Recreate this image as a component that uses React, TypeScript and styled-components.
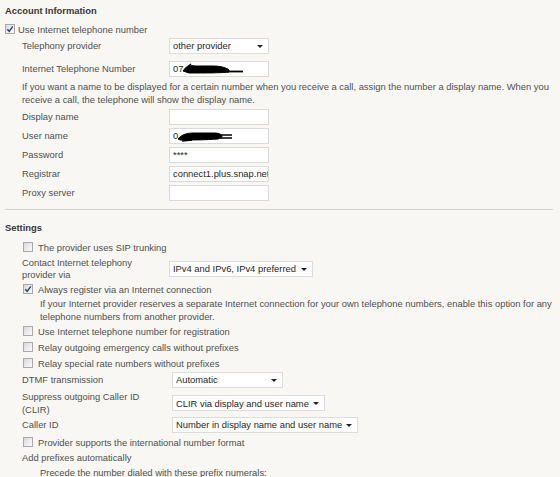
import React from "react";
import styled, { createGlobalStyle } from "styled-components";

const Global = createGlobalStyle`
  html, body { margin: 0; padding: 0; background: #f8f7f3; }
  * { box-sizing: border-box; }
`;

const Page = styled.div`
  width: 560px;
  height: 477px;
  overflow: hidden;
  background: #f8f7f3;
  font-family: "Liberation Sans", Arial, sans-serif;
  font-size: 9.4px;
  color: #505050;
  padding: 4px 2px 0 5px;
`;

const SectionTitle = styled.div<{ $mt?: number }>`
  font-weight: bold;
  color: #363636;
  line-height: 13px;
  margin-top: ${(p) => p.$mt ?? 0}px;
`;

const CheckRow = styled.div<{ $indent: number; $gap: number; $mt?: number }>`
  display: flex;
  align-items: center;
  height: 16px;
  gap: ${(p) => p.$gap}px;
  padding-left: ${(p) => p.$indent}px;
  margin-top: ${(p) => p.$mt ?? 0}px;
  white-space: nowrap;
`;

const Box = styled.span`
  width: 10px;
  height: 10px;
  flex: none;
  border: 1px solid #a9a9a9;
  background: linear-gradient(135deg, #d9d9d9 0%, #eeeeee 60%, #fafafa 100%);
  display: flex;
  align-items: center;
  justify-content: center;
`;

const FormRow = styled.div<{ $labelW: number; $mt?: number; $lh?: number }>`
  display: grid;
  grid-template-columns: ${(p) => p.$labelW}px auto;
  align-items: center;
  padding-left: 17px;
  margin-top: ${(p) => p.$mt ?? 0}px;
  line-height: ${(p) => p.$lh ?? 16}px;
`;

const Label = styled.div``;

const Field = styled.div`
  width: 100px;
  height: 16px;
  background: #fff;
  border: 1px solid #dadada;
  color: #262626;
  padding: 0 2px 0 3px;
  line-height: 14px;
  white-space: nowrap;
  overflow: hidden;
  display: flex;
  align-items: center;
`;

const Select = styled.div<{ $w: number }>`
  width: ${(p) => p.$w}px;
  height: 16px;
  background: #fff;
  border: 1px solid #dcdcdc;
  color: #262626;
  padding: 0 5px 0 3px;
  display: flex;
  align-items: center;
  justify-content: space-between;
  white-space: nowrap;
`;

const Arrow = styled.span`
  width: 0;
  height: 0;
  border-left: 3px solid transparent;
  border-right: 3px solid transparent;
  border-top: 3px solid #222;
  flex: none;
`;

const Para = styled.div<{ $indent: number; $mt?: number }>`
  padding-left: ${(p) => p.$indent}px;
  line-height: 13px;
  margin-top: ${(p) => p.$mt ?? 0}px;
`;

const PlainLine = styled.div<{ $indent: number; $lh: number; $mt?: number }>`
  padding-left: ${(p) => p.$indent}px;
  line-height: ${(p) => p.$lh}px;
  margin-top: ${(p) => p.$mt ?? 0}px;
  white-space: nowrap;
`;

const Divider = styled.div`
  margin: 8px 5px 0 0;
  border-top: 1px solid #d4d4cd;
  border-bottom: 1px solid #fcfcfa;
`;

const Check = ({ checked }: { checked?: boolean }) => (
  <Box>
    {checked && (
      <svg width="8" height="8" viewBox="0 0 8 8">
        <path d="M1.3 4.2 L3.2 6.3 L6.8 1.4" fill="none" stroke="#23407a" strokeWidth="1.4" />
      </svg>
    )}
  </Box>
);

const Scribble = ({ w, variant }: { w: number; variant: number }) => (
  <svg width={w} height="12" viewBox={`0 0 ${w} 12`} style={{ flex: "none" }}>
    {variant === 1 ? (
      <g fill="#000" stroke="#000">
        <path d="M0 8 C3 3, 8 2, 12 3 L30 3 C38 3, 44 5, 46 7 L46 9 C40 10, 20 10, 6 10 Z" />
        <path d="M2 6 L8 1" strokeWidth="1.5" />
        <path d="M44 8.5 L60 8.5" strokeWidth="1.8" />
      </g>
    ) : (
      <g fill="#000" stroke="#000">
        <path d="M0 9 C4 4, 10 3, 16 3 L36 3 C42 3, 44 5, 44 7 L40 9 C28 10, 12 10, 2 10 Z" />
        <path d="M4 11 L14 10" strokeWidth="1.4" />
        <path d="M42 5 L54 5 M42 8 L54 8" strokeWidth="1.3" />
      </g>
    )}
  </svg>
);

export default function App() {
  return (
    <Page>
      <Global />
      <SectionTitle>Account Information</SectionTitle>
      <CheckRow $indent={0} $gap={3} $mt={4}>
        <Check checked />
        <span>Use Internet telephone number</span>
      </CheckRow>
      <FormRow $labelW={147} $mt={1}>
        <Label>Telephony provider</Label>
        <Select $w={100}>
          <span>other provider</span>
          <Arrow />
        </Select>
      </FormRow>
      <FormRow $labelW={147} $mt={7}>
        <Label>Internet Telephone Number</Label>
        <Field>
          <span>07</span>
          <Scribble w={62} variant={1} />
        </Field>
      </FormRow>
      <Para $indent={17} $mt={3}>
        If you want a name to be displayed for a certain number when you receive a call, assign the number a display name. When you receive a call, the telephone will show the display name.
      </Para>
      <FormRow $labelW={147} $mt={3}>
        <Label>Display name</Label>
        <Field />
      </FormRow>
      <FormRow $labelW={147} $mt={3}>
        <Label>User name</Label>
        <Field>
          <span>0</span>
          <Scribble w={56} variant={2} />
        </Field>
      </FormRow>
      <FormRow $labelW={147} $mt={3}>
        <Label>Password</Label>
        <Field>****</Field>
      </FormRow>
      <FormRow $labelW={147} $mt={3}>
        <Label>Registrar</Label>
        <Field>connect1.plus.snap.net</Field>
      </FormRow>
      <FormRow $labelW={147} $mt={3}>
        <Label>Proxy server</Label>
        <Field />
      </FormRow>
      <Divider />
      <SectionTitle $mt={10}>Settings</SectionTitle>
      <CheckRow $indent={18} $gap={5} $mt={5}>
        <Check />
        <span>The provider uses SIP trunking</span>
      </CheckRow>
      <FormRow $labelW={147} $mt={2} $lh={12}>
        <Label>
          Contact Internet telephony
          <br />
          provider via
        </Label>
        <Select $w={144}>
          <span>IPv4 and IPv6, IPv4 preferred</span>
          <Arrow />
        </Select>
      </FormRow>
      <CheckRow $indent={18} $gap={5}>
        <Check checked />
        <span>Always register via an Internet connection</span>
      </CheckRow>
      <Para $indent={35}>
        If your Internet provider reserves a separate Internet connection for your own telephone numbers, enable this option for any telephone numbers from another provider.
      </Para>
      <CheckRow $indent={18} $gap={5}>
        <Check />
        <span>Use Internet telephone number for registration</span>
      </CheckRow>
      <CheckRow $indent={18} $gap={5}>
        <Check />
        <span>Relay outgoing emergency calls without prefixes</span>
      </CheckRow>
      <CheckRow $indent={18} $gap={5}>
        <Check />
        <span>Relay special rate numbers without prefixes</span>
      </CheckRow>
      <FormRow $labelW={150} $mt={1}>
        <Label>DTMF transmission</Label>
        <Select $w={111}>
          <span>Automatic</span>
          <Arrow />
        </Select>
      </FormRow>
      <FormRow $labelW={150} $mt={2} $lh={13}>
        <Label>
          Suppress outgoing Caller ID
          <br />
          (CLIR)
        </Label>
        <Select $w={153}>
          <span>CLIR via display and user name</span>
          <Arrow />
        </Select>
      </FormRow>
      <FormRow $labelW={150} $mt={1}>
        <Label>Caller ID</Label>
        <Select $w={186}>
          <span>Number in display name and user name</span>
          <Arrow />
        </Select>
      </FormRow>
      <CheckRow $indent={18} $gap={5} $mt={1}>
        <Check />
        <span>Provider supports the international number format</span>
      </CheckRow>
      <PlainLine $indent={17} $lh={16}>Add prefixes automatically</PlainLine>
      <PlainLine $indent={35} $lh={13}>Precede the number dialed with these prefix numerals:</PlainLine>
    </Page>
  );
}
